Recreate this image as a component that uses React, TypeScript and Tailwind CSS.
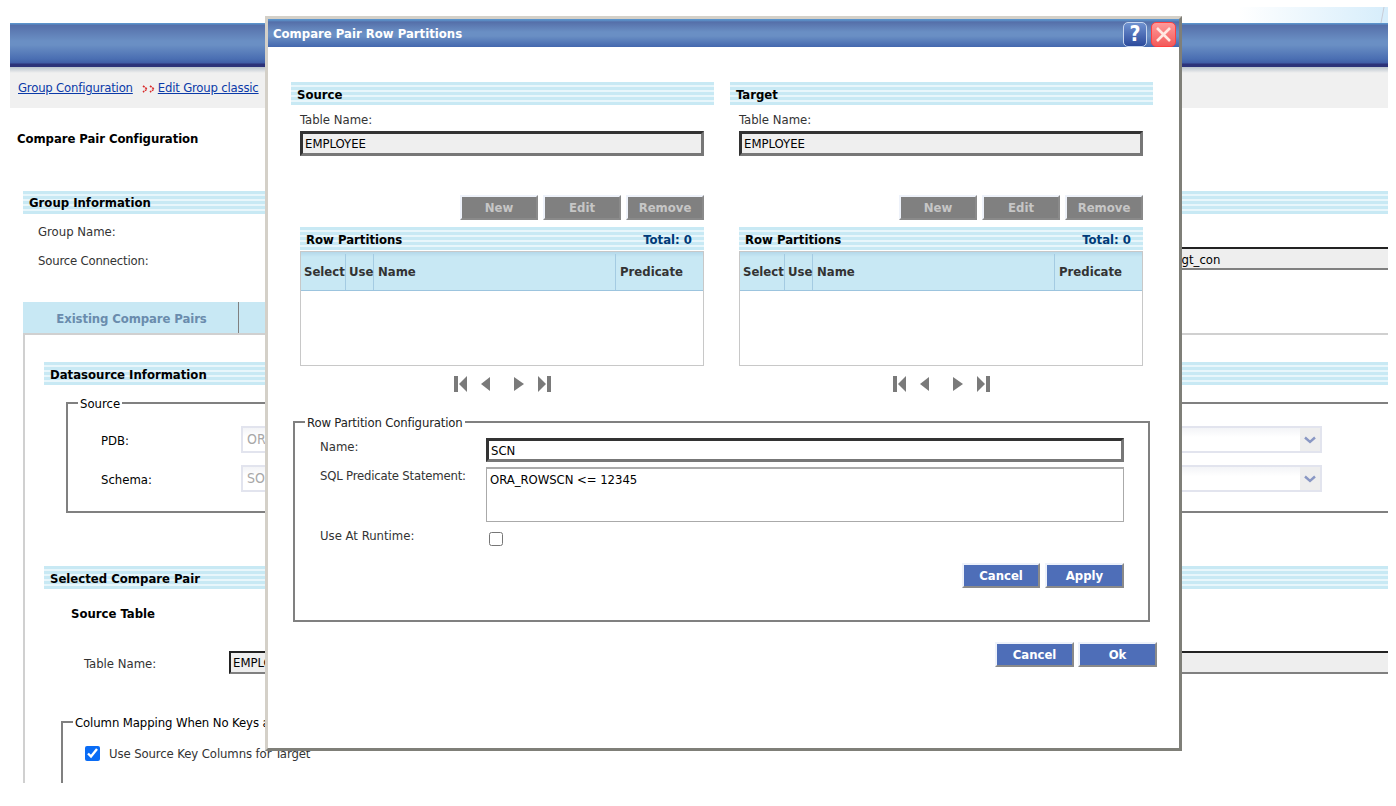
import React from "react";

const FONT = "font-['DejaVu_Sans_Condensed','DejaVu_Sans',sans-serif]";
const STRIPES =
  "bg-[repeating-linear-gradient(180deg,#c8e9f4_0px,#c8e9f4_3px,#e8f6fb_3px,#e8f6fb_5px)]";

function Bar({ children, className = "", pad = "pt-[2px]" }: { children?: React.ReactNode; className?: string; pad?: string }) {
  return (
    <div className={`flex h-[23px] items-center pl-[6px] ${pad} text-[13px] font-bold text-black ${STRIPES} ${className}`}>
      {children}
    </div>
  );
}

function Btn({ label, gray, wide }: { label: string; gray?: boolean; wide?: boolean }) {
  return (
    <div
      className={`flex h-[25px] ${wide ? "w-[79px]" : "w-[78px]"} items-center justify-center border-2 border-b-[#8a8a8a] border-l-[#eef2fa] border-r-[#8a8a8a] border-t-[#eef2fa] text-[13px] font-bold ${
        gray ? "bg-[#808080] text-[#c6c6c6]" : "bg-[#4e6eb8] text-white"
      }`}
    >
      {label}
    </div>
  );
}

function Pager() {
  return (
    <div className="mt-[8px] flex h-[20px] items-center justify-center pl-[2px]">
      <svg width="98" height="18" viewBox="0 0 98 18" fill="#7a7a7a">
        <rect x="0" y="1" width="4" height="16" />
        <path d="M13 1 L5 9 L13 17 Z" />
        <path d="M36 2 L27 9 L36 16 Z" />
        <path d="M60 2 L70 9 L60 16 Z" />
        <path d="M84 1 L92 9 L84 17 Z" />
        <rect x="93" y="1" width="4" height="16" />
      </svg>
    </div>
  );
}

function Column({ title }: { title: string }) {
  return (
    <div className="w-[423px]">
      <Bar pad="pt-[3px]">{title}</Bar>
      <div className="pl-[9px] pr-[10px]">
        <div className="mt-[7px] flex h-[16px] items-center text-[13px] text-[#333]">Table Name:</div>
        <div className="mt-[3px] flex h-[25px] items-center border-[3px] border-b-[#777] border-l-[#333] border-r-[#777] border-t-[#333] bg-[#efefef] pl-[2px] text-[13px] text-black">
          EMPLOYEE
        </div>
        <div className="mt-[39px] flex justify-end gap-[5px]">
          <Btn label="New" gray />
          <Btn label="Edit" gray />
          <Btn label="Remove" gray />
        </div>
        <div className={`mt-[7px] flex h-[23px] items-center justify-between pl-[6px] pr-[12px] pt-[2px] text-[13px] font-bold ${STRIPES}`}>
          <span className="text-black">Row Partitions</span>
          <span className="text-[#003a78]">Total: 0</span>
        </div>
        <div className="mt-px h-[115px] border border-[#c8c8c8]">
          <div className="flex h-[39px] border-b border-[#9cc4de] bg-[linear-gradient(180deg,#b4d8ea_0px,#c8e8f4_5px)] pt-[2px] text-[13px] font-bold text-[#333]">
            <div className="flex w-[45px] items-center border-r border-[#a4cbe2] pl-[3px]">Select</div>
            <div className="flex w-[28px] items-center border-r border-[#a4cbe2] pl-[3px]">Use</div>
            <div className="flex w-[242px] items-center border-r border-[#a4cbe2] pl-[4px]">Name</div>
            <div className="flex flex-1 items-center pl-[4px]">Predicate</div>
          </div>
        </div>
        <Pager />
      </div>
    </div>
  );
}

function Select({ text }: { text: string }) {
  return (
    <div className="flex h-[27px] w-[1081px] border-2 border-[#e2e4ee] bg-[linear-gradient(180deg,#f3f4f7,#ffffff_40%)]">
      <div className="flex-1 pl-[4px] text-[14px] leading-[23px] text-[#a8a8a8]">{text}</div>
      <div className="flex w-[20px] items-center justify-center bg-[#eeeeee]">
        <svg width="12" height="8" viewBox="0 0 12 8" fill="none" stroke="#8a98c4" strokeWidth="2.4">
          <path d="M1 1.5 L6 6 L11 1.5" />
        </svg>
      </div>
    </div>
  );
}

function Background() {
  return (
    <div className="ml-[10px] h-[783px] w-[1378px] overflow-hidden pt-[7px]">
      <div className="flex h-[16px] justify-end">
        <div className="w-[150px] overflow-hidden bg-[linear-gradient(90deg,#ffffff,#d6edfb)]">
          <svg width="150" height="16" viewBox="0 0 150 16" fill="none" stroke="#c9ccd6" strokeWidth="1">
            <path d="M146 0 L143 16" />
          </svg>
        </div>
      </div>
      <div className="h-[44px] bg-[linear-gradient(180deg,#5b93cb_0px,#5b93cb_1px,#556fa9_2px,#6a8fc4_18px,#6a8fc4_22px,#4a6eb2_36px,#3f5ca6_40px,#2c3279_41px,#2c3279_44px)]" />
      <div className="flex h-[41px] items-center bg-[linear-gradient(180deg,#b8c2cc_0px,#f0f0f0_6px)] pl-[8px] pt-[1px] text-[13px] tracking-[-0.2px] text-[#0b3aa8]">
        <span className="underline">Group Configuration</span>
        <svg className="ml-[9px] mr-[3px] mt-px" width="13" height="8" viewBox="0 0 13 8" fill="none" stroke="#d92a2a" strokeWidth="1.6" strokeDasharray="2 0.8">
          <path d="M1 1 L5 4 L1 7 M8 1 L12 4 L8 7" />
        </svg>
        <span className="underline">Edit Group classic</span>
      </div>
      <div className="ml-[7px] mt-[21px] flex h-[20px] items-center text-[13px] font-bold tracking-[-0.07px] text-black">
        Compare Pair Configuration
      </div>
      <Bar className="ml-[13px] mt-[42px]" pad="pt-[1px]">Group Information</Bar>
      <div className="ml-[28px] mt-[8px] flex h-[20px] items-center text-[13px] text-[#333]">Group Name:</div>
      <div className="mt-[5px] flex h-[23px] justify-between">
        <div className="ml-[28px] pt-[4px] text-[13px] tracking-[-0.2px] text-[#333]">Source Connection:</div>
        <div className="flex w-[250px] items-center border-b-[2px] border-t-[2px] border-b-[#808080] border-t-[#222] bg-[#eeeeee] pl-[39px] pt-[3px] text-[13px] text-black">
          tgt_con
        </div>
      </div>
      <div className="ml-[13px] mt-[32px] flex h-[31px]">
        <div className="flex w-[216px] items-center justify-center border-r border-[#808080] bg-[#c8e8f4] pl-[2px] pt-[2px] text-[13px] font-bold tracking-[-0.1px] text-[#6a8cad]">
          Existing Compare Pairs
        </div>
        <div className="w-[200px] bg-[#c8e8f4]" />
      </div>
      <div className="ml-[13px] h-[450px] border-l-2 border-t-2 border-[#d0d0d0] pl-[19px]">
        <Bar className="mt-[27px]">Datasource Information</Bar>
        <fieldset className="ml-[22px] mt-[10px] border-2 border-r-0 border-[#808080] pb-[19px]">
          <legend className="ml-[10px] h-[16px] px-[2px] text-[13px] leading-[18px] text-black">Source</legend>
          <div className="ml-[33px] mt-[15px] flex h-[27px] items-center">
            <div className="w-[140px] pt-[2px] text-[13px] text-black">PDB:</div>
            <Select text="ORCL" />
          </div>
          <div className="ml-[33px] mt-[12px] flex h-[27px] items-center">
            <div className="w-[140px] pt-[2px] text-[13px] text-black">Schema:</div>
            <Select text="SOURCE" />
          </div>
        </fieldset>
        <Bar className="mt-[53px]">Selected Compare Pair</Bar>
        <div className="ml-[27px] mt-[15px] flex h-[20px] items-center text-[13px] font-bold text-black">Source Table</div>
        <div className="mt-[27px] flex h-[23px] items-center">
          <div className="ml-[40px] w-[145px] pt-[2px] text-[13px] text-[#333]">Table Name:</div>
          <div className="flex h-[23px] flex-1 items-center border-[2px] border-r-0 border-b-[#808080] border-l-[#222] border-t-[#222] bg-[#eeeeee] pl-[2px] pt-[1px] text-[13px] text-black">
            EMPLOYEE
          </div>
        </div>
        <fieldset className="ml-[17px] mt-[40px] h-[80px] w-[600px] border-2 border-b-0 border-r-0 border-[#808080]">
          <legend className="ml-[10px] h-[16px] px-[2px] text-[13px] leading-[18px] tracking-[-0.1px] text-black">
            Column Mapping When No Keys are Defined
          </legend>
          <div className="ml-[22px] mt-[16px] flex h-[15px] items-center">
            <input type="checkbox" defaultChecked className="m-0 size-[15px] accent-[#0a6cf5]" />
            <span className="ml-[9px] text-[13px] tracking-[-0.1px] text-[#333]">Use Source Key Columns for Target</span>
          </div>
        </fieldset>
      </div>
    </div>
  );
}

function Modal() {
  return (
    <div className="absolute left-[265px] top-[16px] h-[735px] w-[917px] border-[3px] border-b-[#7f7f78] border-l-[#d4d0c8] border-r-[#7f7f78] border-t-[#d4d0c8] bg-white">
      <div className="flex h-[28px] justify-between bg-[linear-gradient(180deg,#5b93cb_0px,#5b93cb_1px,#556fa9_3px,#6a8fc4_13px,#6a8fc4_17px,#4468ae_28px)] pl-[5px] pr-[3px]">
        <div className="pt-[5px] text-[13px] font-bold text-white">Compare Pair Row Partitions</div>
        <div className="flex items-end gap-[4px]">
          <div className="flex h-[25px] w-[24px] items-center justify-center rounded-[5px] border border-[#c7d6ee] bg-[linear-gradient(180deg,#6f92d0,#2c4a9c)] text-[21px] font-bold leading-none text-white">
            ?
          </div>
          <div className="flex h-[25px] w-[25px] items-center justify-center rounded-[5px] border border-[#ff4040] bg-[linear-gradient(180deg,#ff9a9a,#f25a5a)]">
            <svg width="17" height="17" viewBox="0 0 17 17" stroke="#ffe8e2" strokeWidth="2.6" fill="none">
              <path d="M2 2 L15 15 M15 2 L2 15" />
            </svg>
          </div>
        </div>
      </div>
      <div className="ml-[23px] mt-[35px] flex gap-[16px]">
        <Column title="Source" />
        <Column title="Target" />
      </div>
      <fieldset className="ml-[25px] mt-[20px] h-[208px] w-[857px] border-2 border-[#808080]">
        <legend className="ml-[10px] h-[16px] px-[2px] text-[13px] leading-[18px] tracking-[-0.15px] text-[#222]">Row Partition Configuration</legend>
        <div className="ml-[25px] mt-[8px] flex items-start">
          <div className="w-[166px] pt-px text-[13px] leading-[16px] text-[#333]">Name:</div>
          <div className="flex h-[24px] w-[638px] items-center border-[3px] border-b-[#777] border-l-[#333] border-r-[#777] border-t-[#333] bg-white pl-[2px] pt-[2px] text-[13px] text-black">
            SCN
          </div>
        </div>
        <div className="ml-[25px] mt-[5px] flex items-start">
          <div className="w-[166px] pt-px text-[13px] leading-[16px] tracking-[-0.2px] text-[#333]">SQL Predicate Statement:</div>
          <div className="h-[55px] w-[638px] border border-t-2 border-[#aaaaaa] bg-white pl-[3px] pt-[3px] text-[13px] leading-[16px] tracking-[-0.05px] text-black">
            ORA_ROWSCN &lt;= 12345
          </div>
        </div>
        <div className="ml-[25px] mt-[5px] flex items-start">
          <div className="w-[166px] pt-px text-[13px] leading-[16px] text-[#333]">Use At Runtime:</div>
          <input type="checkbox" className="m-0 ml-[3px] mt-[5px] size-[14px]" />
        </div>
        <div className="ml-[25px] mt-[17px] flex w-[804px] justify-end gap-[5px]">
          <Btn label="Cancel" />
          <Btn label="Apply" wide />
        </div>
      </fieldset>
      <div className="mr-[22px] mt-[20px] flex justify-end gap-[4px]">
        <Btn label="Cancel" wide />
        <Btn label="Ok" wide />
      </div>
    </div>
  );
}

export default function App() {
  return (
    <div className={`relative h-[806px] w-[1396px] overflow-hidden bg-white ${FONT}`}>
      <Background />
      <Modal />
    </div>
  );
}
